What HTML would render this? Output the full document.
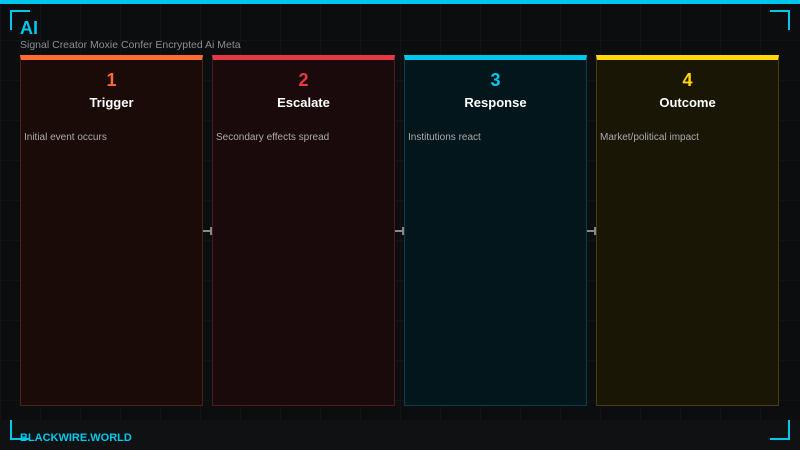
<!DOCTYPE html>
<html><head><meta charset="utf-8"><style>
*{margin:0;padding:0;box-sizing:border-box}
body{width:800px;height:450px;overflow:hidden;background:#0c0d0f;font-family:"Liberation Sans","DejaVu Sans",sans-serif;position:relative;
background-image:linear-gradient(rgba(255,255,255,0.025) 1px,transparent 1px),linear-gradient(90deg,rgba(255,255,255,0.025) 1px,transparent 1px);background-size:40px 40px;background-position:0 0}
.top{position:absolute;left:0;top:0;width:800px;height:4px;background:#00c8ec}
.foot{position:absolute;left:0;top:420px;width:800px;height:30px;background:#101113}
.c{position:absolute;width:20px;height:20px;border-color:#00c8ec;border-style:solid;border-width:0}
.tl{left:10px;top:10px;border-top-width:2px;border-left-width:2px}
.tr{right:10px;top:10px;border-top-width:2px;border-right-width:2px}
.bl{left:10px;bottom:10px;border-bottom-width:2px;border-left-width:2px}
.br{right:10px;bottom:10px;border-bottom-width:2px;border-right-width:2px}
h1{position:absolute;left:20px;top:18px;font-size:18px;font-weight:bold;color:#00c8ec}
.sub{position:absolute;left:20px;top:39px;font-size:10.5px;color:#8a8d93}
.card{position:absolute;top:55px;width:183px;height:351px;border:1px solid;border-top:5px solid}
.num{position:absolute;top:10px;width:100%;text-align:center;font-size:18px;font-weight:bold}
.t{position:absolute;top:35px;width:100%;text-align:center;font-size:13px;font-weight:bold;color:#fff}
.d{position:absolute;left:3px;top:72px;font-size:10px;color:#aaa}
.ar{position:absolute;top:230px;width:9px;height:2px;background:#888}
.ar:after{content:"";position:absolute;right:0;top:-3px;width:2px;height:8px;background:#888}
.fw{position:absolute;left:20px;top:432px;font-size:11px;font-weight:bold;color:#00c8ec}
</style></head><body>
<div class="top"></div><div class="foot"></div>
<div class="c tl"></div><div class="c tr"></div><div class="c bl"></div><div class="c br"></div>
<h1>AI</h1>
<div class="sub">Signal Creator Moxie Confer Encrypted Ai Meta</div>
<div class="card" style="left:20px;background:#1a0b08;border-color:#4a2216;border-top-color:#ff6b35"><div class="num" style="color:#ff6b35">1</div><div class="t">Trigger</div><div class="d">Initial event occurs</div></div>
<div class="card" style="left:212px;background:#1a0a0b;border-color:#4a1c20;border-top-color:#e63946"><div class="num" style="color:#e63946">2</div><div class="t">Escalate</div><div class="d">Secondary effects spread</div></div>
<div class="card" style="left:404px;background:#02161b;border-color:#0b3e4a;border-top-color:#00c8ec"><div class="num" style="color:#00c8ec">3</div><div class="t">Response</div><div class="d">Institutions react</div></div>
<div class="card" style="left:596px;background:#1a1606;border-color:#4a3e10;border-top-color:#ffd60a"><div class="num" style="color:#ffd60a">4</div><div class="t">Outcome</div><div class="d">Market/political impact</div></div>
<div class="ar" style="left:203px"></div><div class="ar" style="left:395px"></div><div class="ar" style="left:587px"></div>
<div class="fw">BLACKWIRE.WORLD</div>
</body></html>
